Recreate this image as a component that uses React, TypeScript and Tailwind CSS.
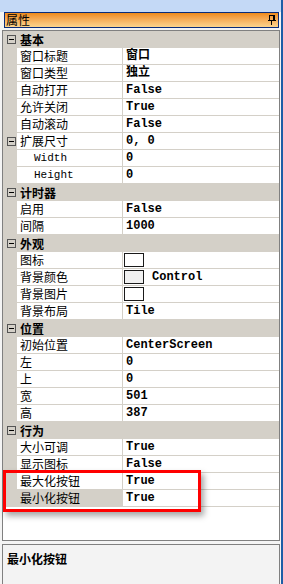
import React from "react";

type Row =
  | { kind: "cat"; label: string }
  | {
      kind: "prop";
      label: string;
      value?: string;
      swatch?: string;
      expander?: boolean;
      indent?: boolean;
      selected?: boolean;
    };

const rows: Row[] = [
  { kind: "cat", label: "基本" },
  { kind: "prop", label: "窗口标题", value: "窗口" },
  { kind: "prop", label: "窗口类型", value: "独立" },
  { kind: "prop", label: "自动打开", value: "False" },
  { kind: "prop", label: "允许关闭", value: "True" },
  { kind: "prop", label: "自动滚动", value: "False" },
  { kind: "prop", label: "扩展尺寸", value: "0, 0", expander: true },
  { kind: "prop", label: "Width", value: "0", indent: true },
  { kind: "prop", label: "Height", value: "0", indent: true },
  { kind: "cat", label: "计时器" },
  { kind: "prop", label: "启用", value: "False" },
  { kind: "prop", label: "间隔", value: "1000" },
  { kind: "cat", label: "外观" },
  { kind: "prop", label: "图标", swatch: "#ffffff" },
  { kind: "prop", label: "背景颜色", swatch: "#f0f0f0", value: "Control" },
  { kind: "prop", label: "背景图片", swatch: "#ffffff" },
  { kind: "prop", label: "背景布局", value: "Tile" },
  { kind: "cat", label: "位置" },
  { kind: "prop", label: "初始位置", value: "CenterScreen" },
  { kind: "prop", label: "左", value: "0" },
  { kind: "prop", label: "上", value: "0" },
  { kind: "prop", label: "宽", value: "501" },
  { kind: "prop", label: "高", value: "387" },
  { kind: "cat", label: "行为" },
  { kind: "prop", label: "大小可调", value: "True" },
  { kind: "prop", label: "显示图标", value: "False" },
  { kind: "prop", label: "最大化按钮", value: "True" },
  { kind: "prop", label: "最小化按钮", value: "True", selected: true },
];

const cjk = { fontFamily: '"Noto Sans CJK SC", sans-serif' };
const mono = { fontFamily: '"Liberation Mono", "Noto Sans CJK SC", monospace' };

function Expander() {
  return (
    <svg width="9" height="9" viewBox="0 0 9 9" className="block">
      <rect x="0.5" y="0.5" width="8" height="8" fill="none" stroke="#555" />
      <line x1="2" y1="4.5" x2="7" y2="4.5" stroke="#000" />
    </svg>
  );
}

function Pin() {
  return (
    <svg width="8" height="10" viewBox="0 0 8 10" className="block">
      <rect x="1.5" y="0.5" width="5" height="5" fill="none" stroke="#000" />
      <line x1="5.5" y1="1" x2="5.5" y2="5" stroke="#000" />
      <line x1="0" y1="5.5" x2="8" y2="5.5" stroke="#000" />
      <line x1="3.5" y1="6" x2="3.5" y2="10" stroke="#000" />
    </svg>
  );
}

export default function App() {
  return (
    <div className="relative w-[283px] h-[584px] overflow-hidden bg-[#f4f4f4] flex">
      <div className="flex flex-col w-[281px] h-full">
        <div className="h-[12px] bg-[#c4d9f6] shrink-0" />
        <div className="ml-[4px] w-[275px] h-[16px] border border-[#0a2c7a] bg-gradient-to-b from-[#ee8a14] to-[#fbd48c] flex items-center justify-between pl-[1px] pr-[2px] shrink-0">
          <span className="text-[12px] leading-[14px] text-black" style={cjk}>
            属性
          </span>
          <Pin />
        </div>
        <div className="h-[2px] shrink-0" />
        <div className="ml-[2px] w-[278px] h-[511px] border border-[#808080] bg-white flex flex-col shrink-0">
          {rows.map((r, i) =>
            r.kind === "cat" ? (
              <div key={i} className="h-[17px] bg-[#d4d0c8] flex items-center shrink-0">
                <div className="w-[14px] flex items-center justify-center pl-[2px]">
                  <Expander />
                </div>
                <span className="ml-[3px] text-[12px] leading-[16px] font-bold text-black" style={cjk}>
                  {r.label}
                </span>
              </div>
            ) : (
              <div key={i} className="h-[17px] flex shrink-0">
                <div className="w-[14px] bg-[#d4d0c8] flex items-center justify-center pl-[2px]">
                  {r.expander ? <Expander /> : null}
                </div>
                <div
                  className={`w-[106px] border-r border-b border-[#d4d0c8] flex items-center ${
                    r.selected ? "bg-[#d4d0c8]" : "bg-white"
                  } ${r.indent ? "pl-[17px]" : "pl-[3px]"}`}
                >
                  {r.indent ? (
                    <span className="text-[11px] leading-[16px] text-black" style={mono}>
                      {r.label}
                    </span>
                  ) : (
                    <span className="text-[12px] leading-[16px] text-black" style={cjk}>
                      {r.label}
                    </span>
                  )}
                </div>
                <div className="flex-1 border-b border-[#d4d0c8] flex items-center pl-[1px]">
                  {r.swatch ? (
                    <div
                      className="w-[20px] h-[14px] border border-[#1a1a1a] mr-[8px]"
                      style={{ backgroundColor: r.swatch }}
                    />
                  ) : (
                    <div className="w-[2px]" />
                  )}
                  {r.value ? (
                    <span className="text-[12px] leading-[16px] font-bold text-black" style={mono}>
                      {r.value}
                    </span>
                  ) : null}
                </div>
              </div>
            )
          )}
        </div>
        <div className="h-[3px] shrink-0" />
        <div className="ml-[2px] w-[278px] flex-1 border-t border-l border-r border-[#808080] bg-[#f3f3f3] pl-[4px] pt-[1px]">
          <span className="text-[12px] leading-[16px] font-bold text-black" style={cjk}>
            最小化按钮
          </span>
        </div>
      </div>
      <div className="w-[2px] h-full bg-[#1e5ea6] shrink-0" />
      <div className="absolute left-[3px] top-[470px] w-[198px] h-[42px] border-[3px] border-[#ff0000] shadow-[3px_4px_6px_rgba(0,0,0,0.35)]" />
    </div>
  );
}
